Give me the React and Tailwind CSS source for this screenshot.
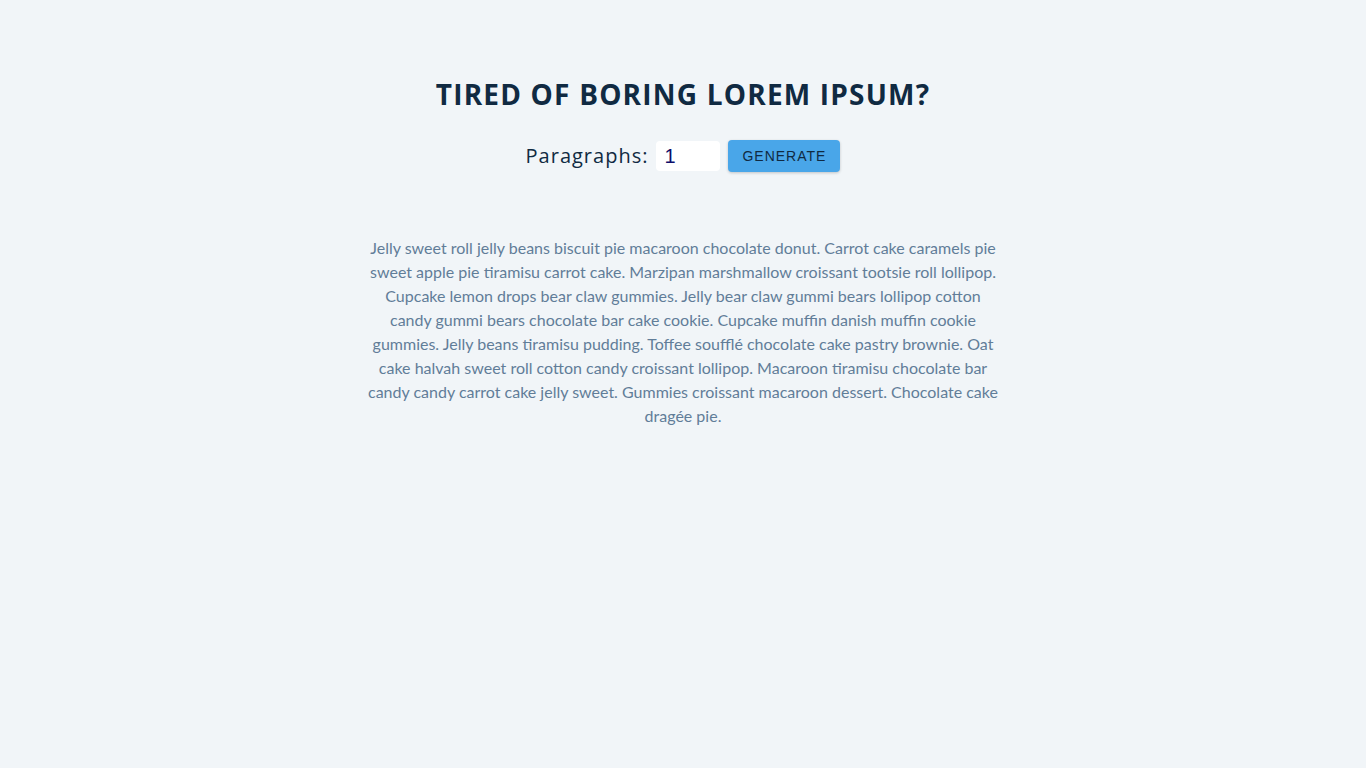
import React, { useState } from "react";

const text =
  "Jelly sweet roll jelly beans biscuit pie macaroon chocolate donut. Carrot cake caramels pie sweet apple pie tiramisu carrot cake. Marzipan marshmallow croissant tootsie roll lollipop. Cupcake lemon drops bear claw gummies. Jelly bear claw gummi bears lollipop cotton candy gummi bears chocolate bar cake cookie. Cupcake muffin danish muffin cookie gummies. Jelly beans tiramisu pudding. Toffee soufflé chocolate cake pastry brownie. Oat cake halvah sweet roll cotton candy croissant lollipop. Macaroon tiramisu chocolate bar candy candy carrot cake jelly sweet. Gummies croissant macaroon dessert. Chocolate cake dragée pie.";

const App = () => {
  const [count, setCount] = useState(1);

  return (
    <div className="min-h-screen bg-[#f1f5f8] font-['Lato',sans-serif]">
      <section className="mx-auto w-[90vw] max-w-[40rem] pt-[77px] text-center">
        <h3 className="font-['Open_Sans',sans-serif] text-[28px] font-bold uppercase leading-[35px] tracking-[1.2px] text-[#102a42]">
          tired of boring lorem ipsum?
        </h3>
        <form
          className="mt-[28px] mb-16 flex items-center justify-center"
          onSubmit={(e) => e.preventDefault()}
        >
          <label
            htmlFor="amount"
            className="text-xl tracking-[1px] text-[#102a42] font-['Open_Sans',sans-serif]"
          >
            Paragraphs:
          </label>
          <input
            type="number"
            id="amount"
            value={count}
            onChange={(e) => setCount(e.target.value)}
            className="mx-2 h-[30px] w-16 rounded-[0.25rem] border-none bg-white px-2 text-xl text-[#0d0d6b] outline-none font-['Liberation_Sans',sans-serif]"
          />
          <button
            type="submit"
            className="h-8 w-[112px] rounded-[0.25rem] border-2 border-transparent bg-[#49a6e9] font-['Liberation_Sans',sans-serif] text-sm uppercase tracking-[1px] text-[#102a42] shadow-[0_1px_3px_rgba(0,0,0,0.2)]"
          >
            generate
          </button>
        </form>
        <article>
          <p className="mb-8 text-base leading-6 text-[#617d98]">{text}</p>
        </article>
      </section>
    </div>
  );
};

export default App;
